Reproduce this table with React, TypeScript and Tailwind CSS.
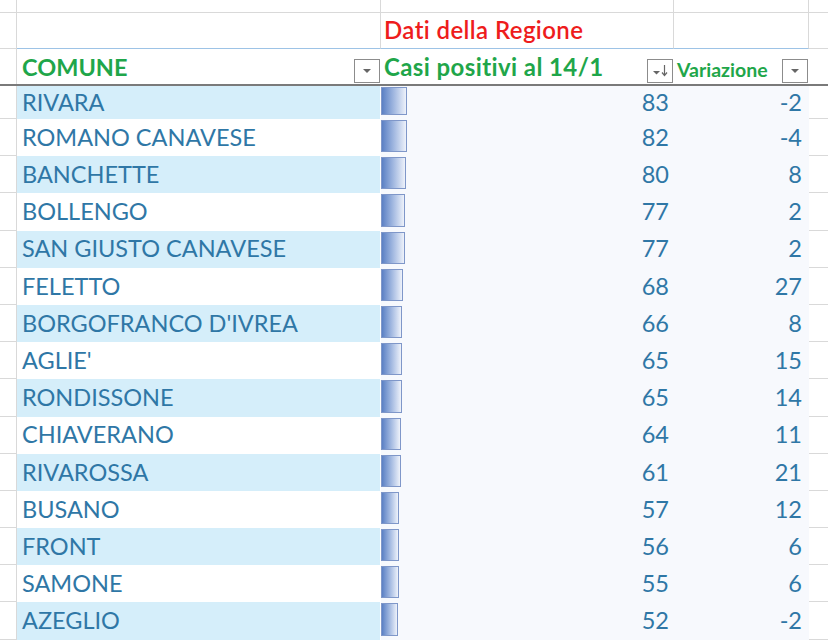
import React from "react";

const rows: [string, number, number][] = [
  ["RIVARA", 83, -2],
  ["ROMANO CANAVESE", 82, -4],
  ["BANCHETTE", 80, 8],
  ["BOLLENGO", 77, 2],
  ["SAN GIUSTO CANAVESE", 77, 2],
  ["FELETTO", 68, 27],
  ["BORGOFRANCO D'IVREA", 66, 8],
  ["AGLIE'", 65, 15],
  ["RONDISSONE", 65, 14],
  ["CHIAVERANO", 64, 11],
  ["RIVAROSSA", 61, 21],
  ["BUSANO", 57, 12],
  ["FRONT", 56, 6],
  ["SAMONE", 55, 6],
  ["AZEGLIO", 52, -2],
];

function FilterBtn({ sort }: { sort?: boolean }) {
  return (
    <div className="w-[26px] h-[24px] border border-[#8c8c8c] bg-white flex items-center justify-center shrink-0">
      {sort ? (
        <svg width="20" height="18" viewBox="0 0 20 18">
          <path d="M3 9 L10 9 L6.5 12.5 Z" fill="#666" />
          <path d="M14.5 3 L14.5 13" stroke="#666" strokeWidth="1.2" />
          <path d="M12 10.5 L14.5 13.5 L17 10.5" stroke="#666" strokeWidth="1.2" fill="none" />
        </svg>
      ) : (
        <svg width="14" height="10" viewBox="0 0 14 10">
          <path d="M3 3 L11 3 L7 7 Z" fill="#666" />
        </svg>
      )}
    </div>
  );
}

export default function App() {
  return (
    <div
      className="w-[828px] h-[640px] overflow-hidden bg-white flex flex-col"
      style={{ fontFamily: "Lato, 'Open Sans', sans-serif" }}
    >
      {/* Row 1 */}
      <div className="flex h-[13px] shrink-0">
        <div className="w-[17px] border-r border-b border-[#d9d9d9]" />
        <div className="w-[364px] border-r border-b border-[#d9d9d9]" />
        <div className="w-[293px] border-r border-b border-[#d9d9d9]" />
        <div className="w-[135px] border-r border-b border-[#d9d9d9]" />
        <div className="flex-1 border-b border-[#d9d9d9]" />
      </div>
      {/* Row 2 */}
      <div className="flex h-[36px] shrink-0">
        <div className="w-[17px] border-r border-b border-[#d9d9d9]" />
        <div className="w-[364px] border-r border-[#d9d9d9] border-b border-b-[#9dc3e6]" />
        <div className="w-[293px] border-r border-[#d9d9d9] border-b border-b-[#9dc3e6] flex items-end pl-[3px] pb-[6px]">
          <span className="text-[24px] leading-none font-semibold text-[#ee1c1c] tracking-[0.4px]">Dati della Regione</span>
        </div>
        <div className="w-[135px] border-r border-[#d9d9d9] border-b border-b-[#9dc3e6]" />
        <div className="flex-1 border-b border-[#d9d9d9]" />
      </div>
      {/* Row 3 header */}
      <div className="flex h-[35px] shrink-0">
        <div className="w-[17px] border-r border-[#d9d9d9]" />
        <div className="w-[364px] flex items-end justify-between pl-[5px] pb-[1px] pr-[1px]">
          <span className="text-[23.5px] leading-none font-bold text-[#1fa64a] pb-[4px]">COMUNE</span>
          <FilterBtn />
        </div>
        <div className="w-[293px] flex items-end justify-between pl-[3px] pb-[1px] pr-[1px]">
          <span className="text-[24px] leading-none font-bold text-[#1fa64a] pb-[4px] tracking-[0.4px]">Casi positivi al 14/1</span>
          <FilterBtn sort />
        </div>
        <div className="w-[135px] flex items-end justify-between pl-[3px] pb-[1px] pr-[1px]">
          <span className="text-[19.5px] leading-none font-bold text-[#1fa64a] pb-[4px]">Variazione</span>
          <FilterBtn />
        </div>
        <div className="flex-1" />
      </div>
      <div className="h-[2px] bg-[#7a7a7a] shrink-0" />
      {/* Data rows */}
      {rows.map(([name, cases, delta], i) => {
        const barW = 0.29 * cases + 1.9;
        const band = i % 2 === 0 ? "bg-[#d5eefa]" : "bg-white";
        return (
          <div
            key={name}
            className={`flex shrink-0 ${i === 0 ? "h-[33px]" : "h-[37.2px]"}`}
          >
            <div className="w-[17px] border-r border-b border-[#d9d9d9]" />
            <div className="w-[364px] border-r border-white flex">
              <div className={`flex-1 ${band} flex items-center pl-[5px]`}>
                <span className="text-[23.5px] leading-none text-[#2f77a6]">{name}</span>
              </div>
            </div>
            <div className="w-[293px] bg-[#f7f9fd] flex pr-[5px]">
              <div
                className="mt-[1px] mb-[4px] border border-[#7f97c9] bg-gradient-to-r from-[#5b80c4] to-[#eef2fa] shrink-0"
                style={{ width: `${barW}px` }}
              />
              <div className="flex-1 flex items-center justify-end">
                <span className="text-[23.5px] leading-none text-[#2f77a6]">{cases}</span>
              </div>
            </div>
            <div className="w-[135px] bg-[#f7f9fd] flex items-center justify-end pr-[7px]">
              <span className="text-[23.5px] leading-none text-[#2f77a6]">{delta}</span>
            </div>
            <div className="flex-1 border-b border-[#d9d9d9]" />
          </div>
        );
      })}
    </div>
  );
}
